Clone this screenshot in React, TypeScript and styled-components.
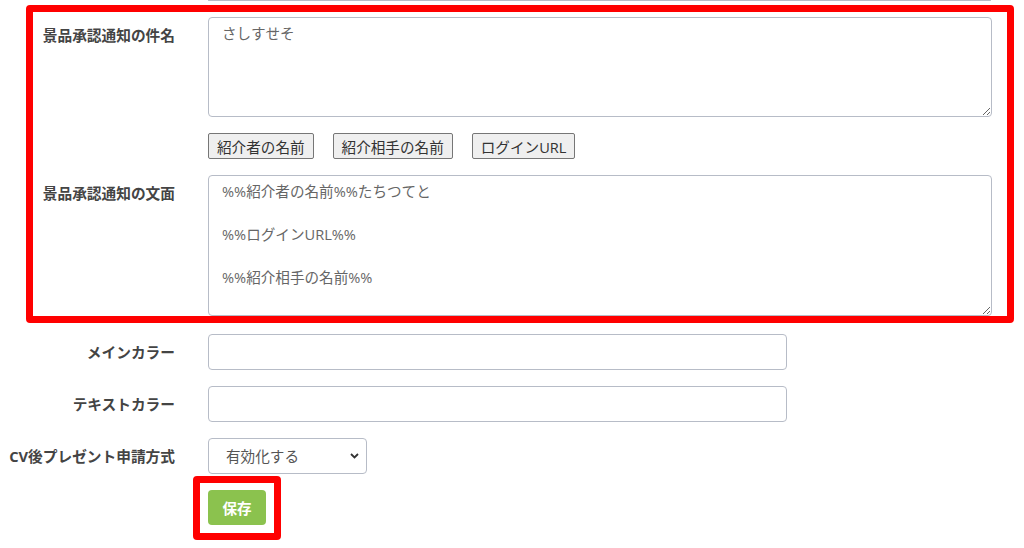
import React from 'react';
import styled, { createGlobalStyle } from 'styled-components';

const GlobalStyle = createGlobalStyle`
    html, body {
        margin: 0;
        padding: 0;
        background: #fff;
    }
    body {
        font-family: 'Open Sans', 'Noto Sans CJK JP', sans-serif;
        font-size: 14.6px;
        line-height: 1.5;
        color: #444;
    }
`;

const fieldBorder = '#b7bcc7';

const Page = styled.div`
    width: 1024px;
    height: 548px;
    overflow: hidden;
    display: flex;
    flex-direction: column;
`;

const PrevFieldEdge = styled.div`
    margin-left: 208px;
    width: 781px;
    height: 0;
    border: 1px solid ${fieldBorder};
    border-top: none;
    border-radius: 0 0 3px 3px;
`;

const Highlight = styled.section`
    margin: 4px 10px 0 26px;
    border: 7px solid #ff0000;
    border-radius: 4px;
    padding: 5px 15px 0 0;
    display: flex;
    flex-direction: column;
    gap: 16px;
`;

const FormRow = styled.div<{ $label: number }>`
    display: grid;
    grid-template-columns: ${(p) => p.$label}px 1fr;
    column-gap: 33px;
    align-items: start;
`;

const Label = styled.label`
    text-align: right;
    font-weight: 700;
    font-size: 14.7px;
    line-height: 36px;
    color: #444;
    white-space: nowrap;
`;

const TextArea = styled.textarea<{ $height: number }>`
    box-sizing: border-box;
    width: 100%;
    height: ${(p) => p.$height}px;
    margin: 0;
    display: block;
    padding: 5px 13px;
    border: 1px solid ${fieldBorder};
    border-radius: 4px;
    font-family: inherit;
    font-size: 14.6px;
    line-height: 21.5px;
    color: #666;
    background: #fff;
    resize: vertical;
    outline: none;
`;

const TagBar = styled.div`
    display: flex;
    gap: 19px;
`;

const TagButton = styled.button`
    height: 26px;
    padding: 0 8px;
    background: #efefef;
    border: 1px solid #767676;
    border-radius: 2px;
    font-family: inherit;
    font-size: 14.6px;
    color: #333;
    cursor: pointer;
`;

const LowerRows = styled.div`
    margin-top: 11px;
    display: flex;
    flex-direction: column;
    gap: 16px;
`;

const TextInput = styled.input`
    box-sizing: border-box;
    width: 579px;
    height: 36px;
    padding: 6px 12px;
    border: 1px solid ${fieldBorder};
    border-radius: 4px;
    font-family: inherit;
    font-size: 14.6px;
    color: #666;
    outline: none;
`;

const SelectWrap = styled.div`
    position: relative;
    width: 159px;
    height: 36px;
`;

const Select = styled.select`
    box-sizing: border-box;
    width: 100%;
    height: 100%;
    padding: 0 28px 0 17px;
    border: 1px solid ${fieldBorder};
    border-radius: 4px;
    background: #fff;
    font-family: inherit;
    font-size: 14.6px;
    color: #555;
    appearance: none;
    outline: none;
`;

const Chevron = styled.svg`
    position: absolute;
    right: 8px;
    top: 15px;
    pointer-events: none;
`;

const SaveRow = styled.div`
    padding-left: 193px;
    margin-top: 2px;
`;

const SaveFrame = styled.div`
    display: inline-block;
    border: 7px solid #ff0000;
    border-radius: 4px;
    padding: 7px 8px 8px 8px;
`;

const SaveButton = styled.button`
    display: block;
    width: 58px;
    height: 35px;
    border: none;
    border-radius: 4px;
    background: #8bc24e;
    color: #fff;
    font-family: inherit;
    font-size: 14.6px;
    font-weight: 700;
    cursor: pointer;
`;

const bodyText = '%%紹介者の名前%%たちつてと\n\n%%ログインURL%%\n\n%%紹介相手の名前%%';

export default function App() {
    return (
        <Page>
            <GlobalStyle />
            <PrevFieldEdge />
            <Highlight>
                <FormRow $label={142}>
                    <Label>景品承認通知の件名</Label>
                    <TextArea $height={100} defaultValue="さしすせそ" />
                </FormRow>
                <FormRow $label={142}>
                    <span />
                    <TagBar>
                        <TagButton type="button">紹介者の名前</TagButton>
                        <TagButton type="button">紹介相手の名前</TagButton>
                        <TagButton type="button">ログインURL</TagButton>
                    </TagBar>
                </FormRow>
                <FormRow $label={142}>
                    <Label>景品承認通知の文面</Label>
                    <TextArea $height={141} defaultValue={bodyText} />
                </FormRow>
            </Highlight>
            <LowerRows>
                <FormRow $label={175}>
                    <Label>メインカラー</Label>
                    <TextInput type="text" />
                </FormRow>
                <FormRow $label={175}>
                    <Label>テキストカラー</Label>
                    <TextInput type="text" />
                </FormRow>
                <FormRow $label={175}>
                    <Label>CV後プレゼント申請方式</Label>
                    <SelectWrap>
                        <Select defaultValue="on">
                            <option value="on">有効化する</option>
                            <option value="off">無効化する</option>
                        </Select>
                        <Chevron width="9" height="6" viewBox="0 0 9 6">
                            <path d="M1 1 L4.5 4.5 L8 1" fill="none" stroke="#333" strokeWidth="1.8" />
                        </Chevron>
                    </SelectWrap>
                </FormRow>
            </LowerRows>
            <SaveRow>
                <SaveFrame>
                    <SaveButton type="button">保存</SaveButton>
                </SaveFrame>
            </SaveRow>
        </Page>
    );
}
